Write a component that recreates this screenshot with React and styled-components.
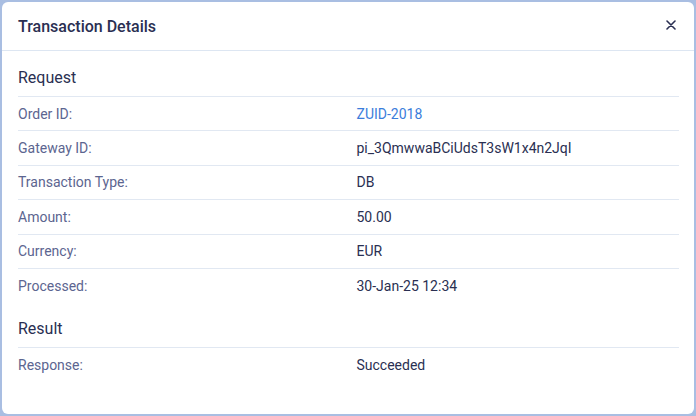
import React from "react";
import styled, { createGlobalStyle } from "styled-components";

const GlobalStyle = createGlobalStyle`
  html, body {
    margin: 0;
    padding: 0;
    background: #a9bee2;
  }
  body {
    font-family: Roboto, "Liberation Sans", Arial, sans-serif;
  }
`;

const details = {
  request: [
    { label: "Order ID:", value: "ZUID-2018", link: true },
    { label: "Gateway ID:", value: "pi_3QmwwaBCiUdsT3sW1x4n2JqI" },
    { label: "Transaction Type:", value: "DB" },
    { label: "Amount:", value: "50.00" },
    { label: "Currency:", value: "EUR" },
    { label: "Processed:", value: "30-Jan-25 12:34" },
  ],
  result: [{ label: "Response:", value: "Succeeded" }],
};

const Backdrop = styled.div`
  width: 696px;
  height: 416px;
  box-sizing: border-box;
  padding: 2px;
`;

const Modal = styled.div`
  width: 692px;
  height: 412px;
  box-sizing: border-box;
  background: #fff;
  border-radius: 6px;
  display: flex;
  flex-direction: column;
  overflow: hidden;
`;

const Header = styled.div`
  height: 49px;
  box-sizing: border-box;
  border-bottom: 1px solid #dde6f2;
  padding: 0 16px;
  display: flex;
  align-items: center;
  justify-content: space-between;
`;

const Title = styled.h2`
  margin: 0;
  font-size: 16px;
  font-weight: 500;
  color: #2a2f52;
`;

const CloseButton = styled.button`
  border: none;
  background: none;
  padding: 0;
  width: 16px;
  height: 16px;
  display: flex;
  align-items: center;
  justify-content: center;
  cursor: pointer;
  margin: -2px -1px 0 0;
`;

const Body = styled.div`
  padding: 0 15px 0 16px;
`;

const SectionTitle = styled.h3`
  margin: 0;
  padding: 16px 0 8px;
  font-size: 16px;
  font-weight: 400;
  line-height: 21px;
  color: #2a2f52;
`;

const Row = styled.div`
  display: grid;
  grid-template-columns: 1fr 1fr;
  column-gap: 16px;
  border-top: 1px solid #e1e8f2;
  padding: 6.7px 0;
  font-size: 14px;
  line-height: 20px;
`;

const Label = styled.div`
  color: #5c6590;
`;

const Value = styled.div`
  color: ${(p) => (p.$link ? "#3b7ddb" : "#2a2f52")};
`;

const Section = ({ title, rows }) => (
  <>
    <SectionTitle>{title}</SectionTitle>
    {rows.map((r) => (
      <Row key={r.label}>
        <Label>{r.label}</Label>
        <Value $link={r.link}>{r.value}</Value>
      </Row>
    ))}
  </>
);

export default function App() {
  return (
    <>
      <GlobalStyle />
      <Backdrop>
        <Modal>
          <Header>
            <Title>Transaction Details</Title>
            <CloseButton aria-label="Close">
              <svg width="10" height="10" viewBox="0 0 10 10">
                <path d="M1 1L9 9M9 1L1 9" stroke="#2a2f52" strokeWidth="1.6" strokeLinecap="round" />
              </svg>
            </CloseButton>
          </Header>
          <Body>
            <Section title="Request" rows={details.request} />
            <Section title="Result" rows={details.result} />
          </Body>
        </Modal>
      </Backdrop>
    </>
  );
}
